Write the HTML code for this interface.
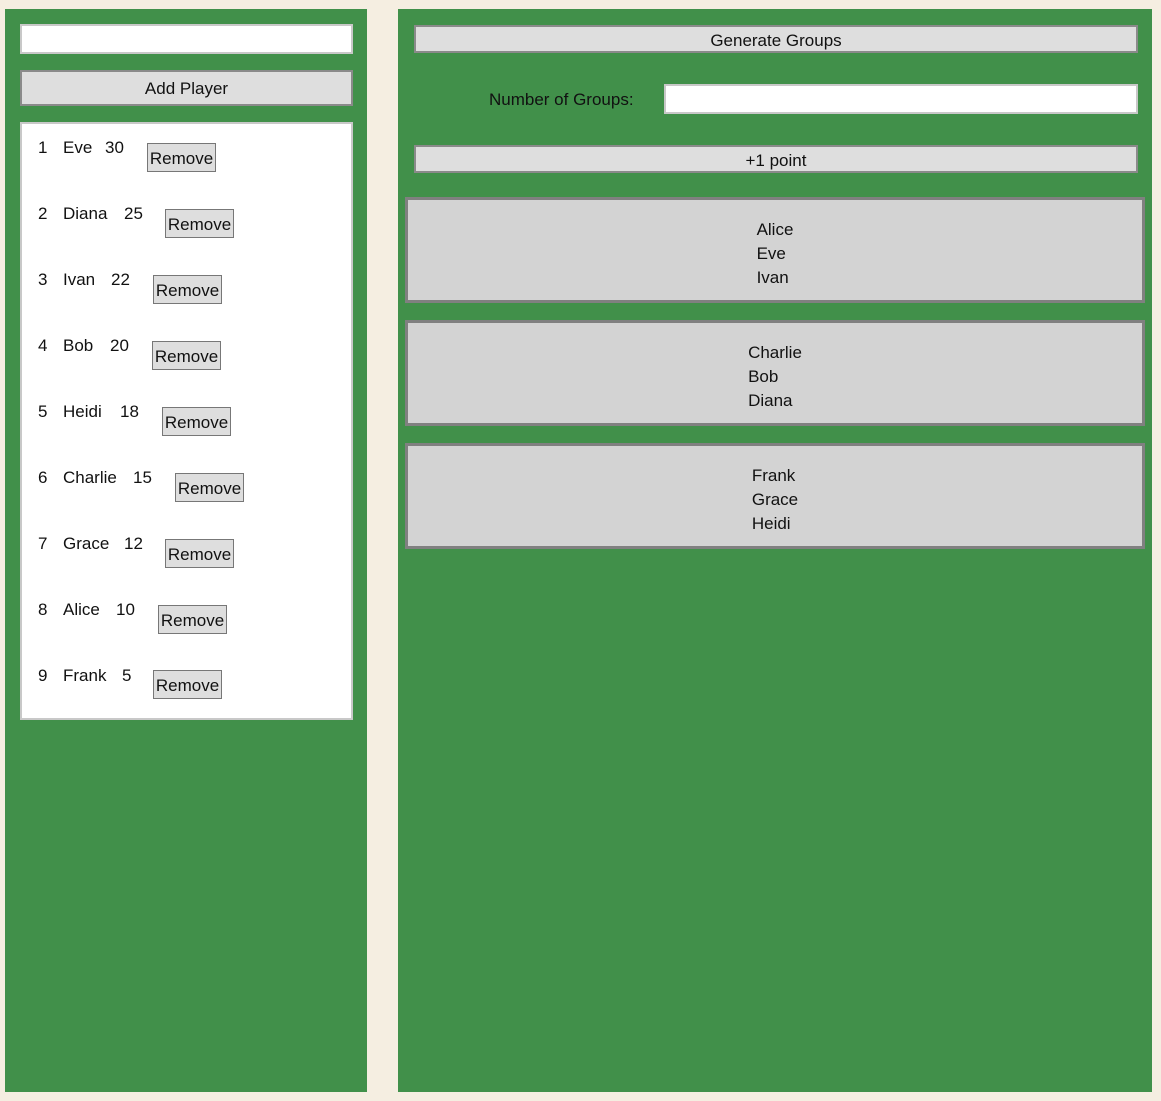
<!DOCTYPE html>
<html><head><style>
body{margin:0;width:1161px;height:1101px;background:#f5eee1;font-family:"Liberation Sans",sans-serif;font-size:17px;color:#111;position:relative;overflow:hidden}
.p{position:absolute;background:#41904a}
.a{position:absolute;box-sizing:border-box}
.btn{background:#dedede;border:2px solid #8a8a8a;text-align:center}
.inp{background:#fff;border:2px solid #c8c8c8}
.row{position:absolute;left:38px;font-size:17px}
.row span{position:absolute;white-space:nowrap}
.rm{position:absolute;background:#dedede;border:1px solid #777;box-sizing:border-box;height:29px;width:69px;font-size:17px;line-height:29px;text-align:center}
.g{position:absolute;left:405px;width:740px;height:106px;box-sizing:border-box;background:#d3d3d3;border:3px solid #808080;text-align:center;padding-top:18px;line-height:24px}
.g div{display:inline-block;text-align:left}
</style></head><body>
<div class="p" style="left:5px;top:9px;width:362px;height:1083px"></div>
<div class="p" style="left:398px;top:9px;width:754px;height:1083px"></div>
<div class="a inp" style="left:20px;top:24px;width:333px;height:30px"></div>
<div class="a btn" style="left:20px;top:70px;width:333px;height:36px;line-height:34px">Add Player</div>
<div class="a" style="left:20px;top:122px;width:333px;height:598px;background:#fff;border:2px solid #c8c8c8"></div>
<div class="a btn" style="left:414px;top:25px;width:724px;height:28px;line-height:27px">Generate Groups</div>
<div class="a" style="left:489px;top:90px">Number of Groups:</div>
<div class="a inp" style="left:664px;top:84px;width:474px;height:30px"></div>
<div class="a btn" style="left:414px;top:145px;width:724px;height:28px;line-height:27px">+1 point</div>
<div class="g" style="top:197px"><div>Alice<br>Eve<br>Ivan</div></div>
<div class="g" style="top:320px"><div>Charlie<br>Bob<br>Diana</div></div>
<div class="g" style="top:443px"><div>Frank<br>Grace<br>Heidi</div></div>

<div class="row" style="top:138px"><span style="left:0">1</span><span style="left:25px">Eve</span><span style="left:67px">30</span></div><div class="rm" style="left:147px;top:143px">Remove</div>
<div class="row" style="top:204px"><span style="left:0">2</span><span style="left:25px">Diana</span><span style="left:86px">25</span></div><div class="rm" style="left:165px;top:209px">Remove</div>
<div class="row" style="top:270px"><span style="left:0">3</span><span style="left:25px">Ivan</span><span style="left:73px">22</span></div><div class="rm" style="left:153px;top:275px">Remove</div>
<div class="row" style="top:336px"><span style="left:0">4</span><span style="left:25px">Bob</span><span style="left:72px">20</span></div><div class="rm" style="left:152px;top:341px">Remove</div>
<div class="row" style="top:402px"><span style="left:0">5</span><span style="left:25px">Heidi</span><span style="left:82px">18</span></div><div class="rm" style="left:162px;top:407px">Remove</div>
<div class="row" style="top:468px"><span style="left:0">6</span><span style="left:25px">Charlie</span><span style="left:95px">15</span></div><div class="rm" style="left:175px;top:473px">Remove</div>
<div class="row" style="top:534px"><span style="left:0">7</span><span style="left:25px">Grace</span><span style="left:86px">12</span></div><div class="rm" style="left:165px;top:539px">Remove</div>
<div class="row" style="top:600px"><span style="left:0">8</span><span style="left:25px">Alice</span><span style="left:78px">10</span></div><div class="rm" style="left:158px;top:605px">Remove</div>
<div class="row" style="top:666px"><span style="left:0">9</span><span style="left:25px">Frank</span><span style="left:84px">5</span></div><div class="rm" style="left:153px;top:670px">Remove</div>
</body></html>
